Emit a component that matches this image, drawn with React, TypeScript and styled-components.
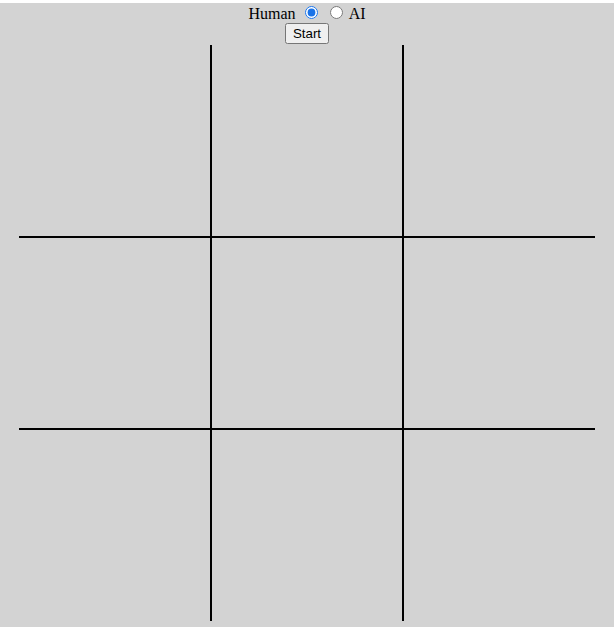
import {useState} from "react";
import styled, {createGlobalStyle} from "styled-components";

const GlobalStyle = createGlobalStyle`
    html {
        background: #ffffff;
    }

    body {
        margin: 3px 0 0 0;
        min-height: calc(100vh - 3px);
        background: #d3d3d3;
        font-family: "Liberation Serif", "Times New Roman", serif;
        font-size: 16px;
        color: #000;
    }
`;

const SIZE = 576;
const CELL = SIZE / 3;

type Player = "human" | "ai";

const App = () => {
    const [first, setFirst] = useState<Player>("human");

    return (
        <>
            <GlobalStyle/>
            <Controls>
                <Row>
                    Human{" "}
                    <Radio type="radio" name="first" checked={first === "human"}
                           onChange={() => setFirst("human")}/>
                    {" "}
                    <Radio type="radio" name="first" checked={first === "ai"}
                           onChange={() => setFirst("ai")}/>
                    {" "}AI
                </Row>
                <Row>
                    <StartButton>Start</StartButton>
                </Row>
            </Controls>
            <Board width={SIZE} height={SIZE} viewBox={`0 0 ${SIZE} ${SIZE}`}>
                {[1, 2].map((i) => (
                    <g key={i} stroke="#000" strokeWidth={2}>
                        <line x1={CELL * i} y1={0} x2={CELL * i} y2={SIZE}/>
                        <line x1={0} y1={CELL * i} x2={SIZE} y2={CELL * i}/>
                    </g>
                ))}
            </Board>
        </>
    );
};

export default App;

const Controls = styled.div`
    text-align: center;
`;

const Row = styled.div``;

const Radio = styled.input`
    margin: 3px 3px 0 5px;
    accent-color: #1a73e8;
`;

const StartButton = styled.button`
    font-family: "Liberation Sans", Arial, sans-serif;
    font-size: 13.333px;
`;

const Board = styled.svg`
    display: block;
    margin: 1px auto 0;
`;
